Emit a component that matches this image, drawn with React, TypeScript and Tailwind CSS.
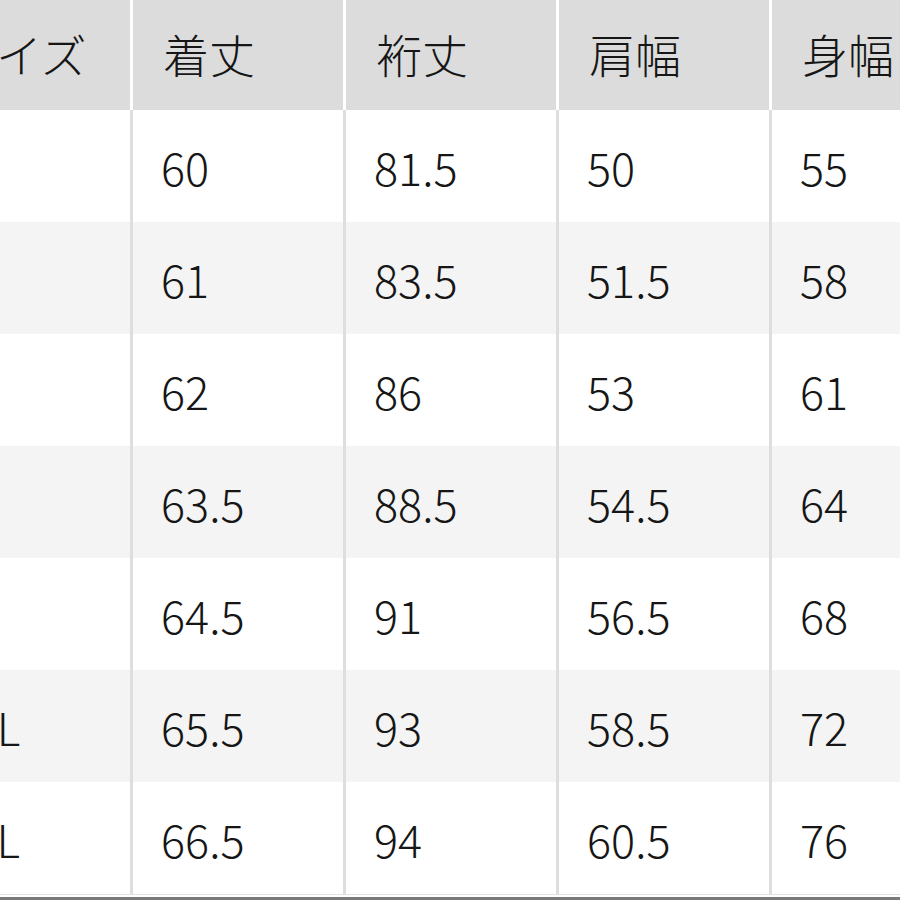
const headers = ['サイズ', '着丈', '裄丈', '肩幅', '身幅']

const rows = [
  ['XS', '60', '81.5', '50', '55'],
  ['S', '61', '83.5', '51.5', '58'],
  ['M', '62', '86', '53', '61'],
  ['L', '63.5', '88.5', '54.5', '64'],
  ['XL', '64.5', '91', '56.5', '68'],
  ['XXL', '65.5', '93', '58.5', '72'],
  ['3XL', '66.5', '94', '60.5', '76'],
]

export default function App() {
  return (
    <div
      className="w-[900px] h-[900px] overflow-hidden bg-white text-[#161616] font-light"
      style={{ fontFamily: '"Noto Sans CJK JP", "Noto Sans", sans-serif' }}
    >
      <div className="ml-[-80px] w-[1067px]">
        {/* header */}
        <div className="flex h-[110px] bg-white">
          {headers.map((h, i) => (
            <div
              key={i}
              className="w-[213px] shrink-0 flex items-center pl-[30px] pb-[4px] bg-[#dcdcdc] border-r-[3px] border-white text-[46px] leading-none"
            >
              {h}
            </div>
          ))}
        </div>
        {/* body */}
        {rows.map((row, r) => (
          <div
            key={r}
            className={`flex h-[112px] ${r % 2 === 1 ? 'bg-[#f4f4f4]' : 'bg-white'}`}
          >
            {row.map((cell, c) => (
              <div
                key={c}
                className="w-[213px] shrink-0 flex items-center pl-[28px] border-r-[3px] border-[#dedede] text-[45px] leading-none"
              >
                {cell}
              </div>
            ))}
          </div>
        ))}
        <div className="h-px bg-[#e2e2e2]" />
        <div className="h-[2px] bg-white" />
        <div className="h-[4px] bg-[#7a7a7a]" />
      </div>
    </div>
  )
}
